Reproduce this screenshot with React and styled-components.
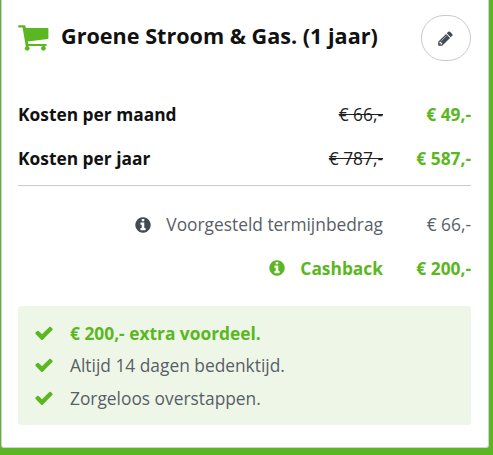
import React from "react";
import styled, { createGlobalStyle } from "styled-components";

const GREEN = "#5bb721";
const GREY = "#595e67";
const DARK = "#444a54";

const GlobalStyle = createGlobalStyle`
  *, *::before, *::after { box-sizing: border-box; }
  body {
    margin: 0;
    background: ${GREEN};
    font-family: "Open Sans", sans-serif;
    overflow: hidden;
  }
`;

const Page = styled.div`
  height: 455px;
  padding: 0 4px 7px 1px;
  background: ${GREEN};
`;

const Card = styled.main`
  height: 448px;
  padding: 15px 17px 0 16px;
  border: 1px solid #d3cfe0;
  border-top: 0;
  border-radius: 0 0 3px 3px;
  background: #fff;
`;

const Header = styled.header`
  display: flex;
  align-items: center;
  height: 46px;
`;

const CartIcon = styled.svg`
  width: 31px;
  height: 26px;
  margin-right: 12px;
  fill: ${GREEN};
  flex: none;
`;

const Title = styled.h1`
  margin: -4px 0 0;
  color: #111;
  font-size: 21.6px;
  line-height: 30px;
  font-weight: 700;
  white-space: nowrap;
`;

const EditButton = styled.button`
  display: flex;
  align-items: center;
  justify-content: center;
  width: 50px;
  height: 46px;
  margin-left: auto;
  padding: 0 2px 0 0;
  border: 1px solid #c9c9cb;
  border-radius: 23px;
  background: #fff;
  color: ${DARK};
`;

const Glyph = styled.svg`
  width: ${(p) => p.$size}px;
  height: ${(p) => p.$size}px;
  fill: currentColor;
  flex: none;
`;

const Costs = styled.section`
  margin-top: 32px;
  padding-bottom: 5px;
  border-bottom: 1px solid #c9cacb;
`;

const Extras = styled.section`
  margin-top: 17px;
`;

const Row = styled.div`
  display: grid;
  grid-template-columns: 1fr auto 88px;
  align-items: center;
  height: 43.5px;
  font-size: 17.35px;
  line-height: 43px;
  white-space: nowrap;
`;

const Label = styled.span`
  color: #111;
  font-weight: 700;
`;

const OldPrice = styled.del`
  color: #222;
`;

const Note = styled.span`
  display: flex;
  grid-column: 1 / 3;
  align-items: center;
  justify-content: flex-end;
  gap: 14px;
  color: ${(p) => (p.$highlight ? GREEN : GREY)};
  font-weight: ${(p) => (p.$highlight ? 700 : 400)};

  svg { color: ${(p) => (p.$highlight ? GREEN : DARK)}; }
`;

const Price = styled.span`
  text-align: right;
  color: ${(p) => (p.$plain ? GREY : GREEN)};
  font-weight: ${(p) => (p.$plain ? 400 : 700)};
`;

const Benefits = styled.ul`
  height: 119px;
  margin: 16px 0 0;
  padding: 10.5px 16px;
  border-radius: 3px;
  background: #eef7e7;
  list-style: none;
`;

const Benefit = styled.li`
  display: flex;
  align-items: center;
  gap: 16px;
  height: 32.5px;
  color: ${(p) => (p.$highlight ? GREEN : GREY)};
  font-size: 17.35px;
  font-weight: ${(p) => (p.$highlight ? 700 : 400)};
  white-space: nowrap;

  svg { color: ${GREEN}; }
`;

const PATHS = {
  pencil:
    "M491 1536l91-91-235-235-91 91v107h128v128h107zm523-928q0-22-22-22-10 0-17 7l-542 542q-7 7-7 17 0 22 22 22 10 0 17-7l542-542q7-7 7-17zm-54-192l416 416-832 832h-416v-416zm683 96q0 53-37 90l-166 166-416-416 166-165q36-38 90-38 53 0 91 38l235 234q37 39 37 91z",
  info: "M1152 1376v-160q0-14-9-23t-23-9h-96v-512q0-14-9-23t-23-9h-320q-14 0-23 9t-9 23v160q0 14 9 23t23 9h96v320h-96q-14 0-23 9t-9 23v160q0 14 9 23t23 9h448q14 0 23-9t9-23zm-128-896v-160q0-14-9-23t-23-9h-192q-14 0-23 9t-9 23v160q0 14 9 23t23 9h192q14 0 23-9t9-23zm640 416q0 209-103 385.5t-279.5 279.5-385.5 103-385.5-103-279.5-279.5-103-385.5 103-385.5 279.5-279.5 385.5-103 385.5 103 279.5 279.5 103 385.5z",
  check:
    "M1671 566q0 40-28 68l-724 724-136 136q-28 28-68 28t-68-28l-136-136-362-362q-28-28-28-68t28-68l136-136q28-28 68-28t68 28l294 295 656-657q28-28 68-28t68 28l136 136q28 28 28 68z",
};

const Icon = ({ name, size }) => (
  <Glyph $size={size} viewBox="0 0 1792 1792" aria-hidden="true">
    <path d={PATHS[name]} />
  </Glyph>
);

const Cart = () => (
  <CartIcon viewBox="0 0 31 26" aria-hidden="true">
    <path d="M1 0.3h5.4q.8 0 1 .8l.5 1.9h21.7q.8 0 .8.8v9.4q0 .7-.7.9L9.8 16.4l.5 2.7h17.5q.9 0 .9 1t-.9 1H8.6q-.9 0-1-.9L4.6 2.6H1q-1 0-1-1.1T1 .3z" />
    <path d="M8 19h2v4H8zM24.7 20h2v3h-2z" />
    <circle cx="9.2" cy="23.3" r="2.4" />
    <circle cx="25.4" cy="23.3" r="2.4" />
  </CartIcon>
);

const costs = [
  { label: "Kosten per maand", was: "€ 66,-", now: "€ 49,-" },
  { label: "Kosten per jaar", was: "€ 787,-", now: "€ 587,-" },
];

const benefits = [
  { text: "€ 200,- extra voordeel.", highlight: true },
  { text: "Altijd 14 dagen bedenktijd." },
  { text: "Zorgeloos overstappen." },
];

export default function App() {
  return (
    <Page>
      <GlobalStyle />
      <Card>
        <Header>
          <Cart />
          <Title>Groene Stroom &amp; Gas. (1 jaar)</Title>
          <EditButton aria-label="Wijzigen">
            <Icon name="pencil" size={17} />
          </EditButton>
        </Header>
        <Costs>
          {costs.map((c) => (
            <Row key={c.label}>
              <Label>{c.label}</Label>
              <OldPrice>{c.was}</OldPrice>
              <Price>{c.now}</Price>
            </Row>
          ))}
        </Costs>
        <Extras>
          <Row>
            <Note>
              <Icon name="info" size={18} />
              Voorgesteld termijnbedrag
            </Note>
            <Price $plain>€ 66,-</Price>
          </Row>
          <Row>
            <Note $highlight>
              <Icon name="info" size={18} />
              Cashback
            </Note>
            <Price>€ 200,-</Price>
          </Row>
        </Extras>
        <Benefits>
          {benefits.map((b) => (
            <Benefit key={b.text} $highlight={b.highlight}>
              <Icon name="check" size={20} />
              {b.text}
            </Benefit>
          ))}
        </Benefits>
      </Card>
    </Page>
  );
}
